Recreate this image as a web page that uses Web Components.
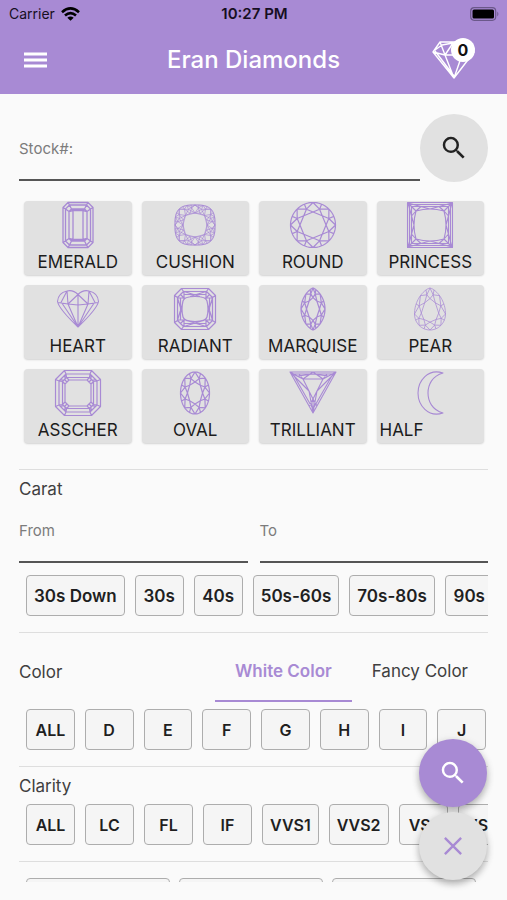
<!DOCTYPE html>
<html lang="en">
<head>
<meta charset="utf-8">
<meta name="viewport" content="width=device-width, initial-scale=1">
<title>Eran Diamonds</title>
<style>
  html, body { margin: 0; height: 100%; }
  body { font-family: Inter, Roboto, "Liberation Sans", sans-serif; color: #404040; background: #fafafa;
    --accent: #a88ad4; --tile: #e1e1e1; --line: #dedede; }
</style>
</head>
<body>
<diamond-app></diamond-app>
<script>
const define = (name, html, setup) => {
  const template = document.createElement('template');
  template.innerHTML = html;
  customElements.define(name, class extends HTMLElement {
    connectedCallback() {
      if (this.shadowRoot) return;
      this.attachShadow({ mode: 'open' }).append(template.content.cloneNode(true));
      if (setup) setup(this, this.shadowRoot);
    }
  });
};

/* ---- Diamond outlines, all on a 48 x 48 canvas ---- */
const C = 24;
const fmt = p => p.map(v => v.toFixed(2)).join(' ');
const poly = pts => 'M' + pts.map(fmt).join('L') + 'Z';
const seg = (a, b) => 'M' + fmt(a) + 'L' + fmt(b);
const lerp = (c, p, k) => [c[0] + (p[0] - c[0]) * k, c[1] + (p[1] - c[1]) * k];

function brilliant(outline, { n = 8, table = 0.55, mid = 0.77, centre = [C, C] } = {}) {
  const rim = t => outline(t * 2 * Math.PI / n - Math.PI / 2);
  let d = poly(Array.from({ length: 96 }, (_, i) => rim(i * n / 96)));
  const inner = i => lerp(centre, rim(i), table);
  const m = i => lerp(centre, rim(i + 0.5), mid);
  d += poly(Array.from({ length: n }, (_, i) => inner(i)));
  for (let i = 0; i < n; i++) {
    d += seg(inner(i), m(i)) + seg(inner(i + 1), m(i)) + seg(m(i), rim(i)) + seg(m(i), rim(i + 1)) + seg(m(i), rim(i + 0.5));
  }
  return d;
}
const ellipse = (rx, ry) => a => [C + rx * Math.cos(a), C + ry * Math.sin(a)];
const cushion = a => {
  const c = Math.cos(a), s = Math.sin(a), k = Math.pow(Math.pow(Math.abs(c), 3) + Math.pow(Math.abs(s), 3), -1 / 3);
  return [C + 20 * c * k, C + 20 * s * k];
};
const marquise = a => {
  const s = Math.sin(a), c = Math.cos(a);
  return [C + Math.sign(c) * 12 * Math.pow(Math.abs(c), 1.5), C + 21 * s];
};
const pear = a => {
  const s = Math.sin(a), c = Math.cos(a);
  return s > 0 ? [C + 15.5 * c, 29 + 16 * s] : [C + Math.sign(c) * 15.5 * Math.pow(Math.abs(c), 1.4), 29 + 26 * s];
};
const octagon = (w, h, c) => [[-w + c, -h], [w - c, -h], [w, -h + c], [w, h - c], [w - c, h], [-w + c, h], [-w, h - c], [-w, -h + c]].map(([x, y]) => [C + x, C + y]);
function steps(rings) {
  const all = rings.map(r => octagon(...r));
  return all.map(poly).join('') + all.slice(1).map((r, k) => r.map((p, i) => seg(all[k][i], p)).join('')).join('');
}
/* Calls fn for each quarter turn and joins the results. */
const quarters = fn => [0, 1, 2, 3].map(q => {
  const rot = ([x, y]) => { for (let i = 0; i < q; i++) [x, y] = [-y, x]; return [C + x, C + y]; };
  return fn(rot);
}).join('');

const SHAPES = {
  emerald: [steps([[15, 22.5, 5], [12.5, 20, 4], [9, 16, 2.5], [5, 14.5, 0]]), 1.3],
  cushion: [brilliant(cushion, { table: 0.6, mid: 0.8 }) + brilliant(cushion, { n: 16, table: 0.6, mid: 0.86 }), 0.7],
  round: [brilliant(ellipse(22.5, 22.5), { table: 0.58, mid: 0.76 }), 1.2],
  princess: [steps([[22.5, 22.5, 0], [18.5, 18.5, 0]]) + quarters(r =>
    `M${fmt(r([-14, -14]))}Q${fmt(r([0, -18]))} ${fmt(r([14, -14]))}` +
    seg(r([-18.5, -18.5]), r([-14, -14])) + seg(r([-22, -22]), r([0, -16])) + seg(r([22, -22]), r([0, -16])) +
    seg(r([-14, -14]), r([-9, -18.5])) + seg(r([14, -14]), r([9, -18.5])) +
    seg(r([-20.5, -20.5]), r([20.5, -20.5]))), 1.1],
  heart: ['M24 9.5Q29 4.5 35 6Q44 8 44.5 16.5Q43 24 24 42Q5 24 3.5 16.5Q4 8 13 6Q19 4.5 24 9.5Z' +
    'M4 17.5L14 19L24 20L34 19L44 17.5M24 9.5V42M14 19L24 42M34 19L24 42M8 18.3L24 42M40 18.3L24 42' +
    'M24 9.5L14 19L13 6L7 17.5M24 9.5L34 19L35 6L41 17.5', 1.1],
  radiant: [steps([[20.5, 20.5, 7], [17.5, 17.5, 6]]) + 'M24 11.5Q35 11.5 36 16Q38 24 36 32Q35 36.5 24 36.5Q13 36.5 12 32Q10 24 12 16Q13 11.5 24 11.5Z' + quarters(r =>
    seg(r([-11, -17.5]), r([5, -12.5])) + seg(r([11, -17.5]), r([-5, -12.5])) + seg(r([-11, -17.5]), r([-11, -9])) +
    seg(r([11, -17.5]), r([11, -9])) + seg(r([-15, -15]), r([-10, -10])) + seg(r([-11, -14.5]), r([11, -14.5]))), 1.2],
  marquise: [brilliant(marquise, { table: 0.54, mid: 0.78 }), 1.2],
  pear: [brilliant(pear, { table: 0.56, mid: 0.78, centre: [C, 27] }), 0.75],
  asscher: [steps([[22.5, 22.5, 9], [19, 19, 7], [15.5, 15.5, 4], [13, 13, 4]]) + quarters(r =>
    seg(r([-18, -13]), r([-13, -13])) + seg(r([-13, -18]), r([-13, -13])) + seg(r([-13, -13]), r([-11, -11]))), 1.2],
  oval: [brilliant(ellipse(14.5, 21), { table: 0.52, mid: 0.74 }), 1.2],
  trilliant: ['M1 3H47L24 44ZM4 5H44L24 40ZM14 10H34L24 30ZM1 3L14 10L24 3L34 10L47 3M14 10L4 5M24 44L20 22L1 3M24 44L28 22L47 3M24 44V30M14 10L10 5M34 10L38 5M9 7L24 5L39 7M20 37L24 30L28 37', 1.1],
  half: ['M37 4C22-1 12 12 12 24S22 49 37 44C26 41 22 32 22 24S26 7 37 4Z', 1.1],
};

define('shape-card', `
<style>
  :host { display: block; min-width: 0; }
  button { width: 100%; height: 74px; padding: 0 3px; border: 0; border-radius: 4px; background: var(--tile);
    box-shadow: 0 1px 2px rgba(0,0,0,.16); font: 400 17px/20px Inter, sans-serif; color: #1c1c1c;
    display: flex; flex-direction: column; align-items: center; gap: 3px; overflow: hidden; }
  svg { width: 48px; height: 48px; flex: none; fill: none; stroke: var(--accent); stroke-linejoin: round; }
  span { white-space: nowrap; }
  :host([start]) span { align-self: flex-start; }
</style>
<button type="button"><svg viewBox="0 0 48 48" aria-hidden="true"><path/></svg><span><slot></slot></span></button>`,
(el, root) => {
  const [d, width] = SHAPES[el.getAttribute('shape')];
  const path = root.querySelector('path');
  path.setAttribute('d', d);
  path.setAttribute('stroke-width', width);
});

define('status-bar', `
<style>
  :host { display: grid; grid-template-columns: 1fr auto 1fr; align-items: center; height: 27px; padding: 0 7px 0 9px;
    background: var(--accent); color: #170f22; font-size: 14px; line-height: 20px; }
  .left { display: flex; align-items: center; gap: 6px; }
  b { font-size: 15px; font-weight: 600; }
  .battery { justify-self: end; }
</style>
<span class="left">Carrier
  <svg width="19" height="14" viewBox="0 0 19 14" fill="none" stroke="#000" stroke-width="2.6"><path d="M1 5.2Q9.5-2.4 18 5.2M4 8.5Q9.5 3.6 15 8.5"/><path d="M9.5 13.8L6.3 10.8Q9.5 8 12.7 10.8Z" fill="#000" stroke="none"/></svg>
</span>
<b>10:27 PM</b>
<svg class="battery" width="30" height="14" viewBox="0 0 30 14"><rect x=".7" y=".7" width="25" height="12.6" rx="3.5" fill="none" stroke="#6b588a" stroke-width="1.2"/><rect x="2.5" y="2.5" width="21.5" height="9" rx="1.5"/><path d="M27.3 4.5Q29.500 7 27.3 9.5Z" fill="#6b588a"/></svg>`);

define('app-header', `
<style>
  :host { display: grid; grid-template-columns: 1fr auto 1fr; align-items: center; height: 67px; padding: 0 18px 2px;
    box-sizing: border-box; background: var(--accent); color: #fff; }
  h1 { margin: 0; font-size: 24px; font-weight: 500; line-height: 32px; }
  button { border: 0; background: none; padding: 0; color: inherit; display: block; }
  .menu { width: 34px; height: 34px; }
  .cart { position: relative; justify-self: end; width: 43px; height: 44px; margin-right: 14px; }
  .badge { position: absolute; top: 0; right: 0; width: 24px; height: 24px; border-radius: 50%; background: #fff; color: #111;
    font: 700 16px/24px Inter, sans-serif; text-align: center; }
</style>
<button class="menu" type="button" aria-label="Menu"><svg width="34" height="34" viewBox="0 0 34 34" fill="#fff"><path d="M6 9.5h23v3H6zM6 15.5h23v3H6zM6 21.5h23v3H6z"/></svg></button>
<h1><slot></slot></h1>
<button class="cart" type="button" aria-label="Basket">
  <svg width="43" height="44" viewBox="0 0 43 44" fill="none" stroke="#fff" stroke-width="1.4" stroke-linejoin="round"><path d="M8 4H34L42 14L22 40L1 14ZM3 13L22 38M1 14L13 17H30L42 14M8 4L13 17L21 5L30 17L34 4M3 12L10 7L21 5M13 17L22 40L30 17"/></svg>
  <span class="badge">0</span>
</button>`);

define('text-field', `
<style>
  :host { display: block; flex: 1; min-width: 0; }
  div { display: flex; flex-direction: column; border-bottom: 2px solid #555; }
  label { font-size: 15px; line-height: 20px; color: #7c7c7c; }
  input { width: 100%; box-sizing: border-box; height: 20px; padding: 0; border: 0; outline: 0; background: none; font: 16px/20px Inter, sans-serif; color: #222; }
</style>
<div><label for="field"><slot></slot></label><input id="field" type="text"></div>`);

const ICONS = {
  search: '<path fill="currentColor" d="M15.5 14h-.79l-.28-.27A6.471 6.471 0 0 0 16 9.5 6.5 6.5 0 1 0 9.5 16c1.61 0 3.09-.59 4.23-1.57l.27.28v.79l5 4.99L20.49 19l-4.99-5zm-6 0C7.01 14 5 11.99 5 9.5S7.01 5 9.5 5 14 7.01 14 9.5 11.99 14 9.5 14z"/>',
  close: '<path d="M5.5 5.5L18.5 18.5M18.5 5.5L5.5 18.5" fill="none" stroke="currentColor" stroke-width="1.9"/>',
};
define('round-button', `
<style>
  :host { display: block; flex: none; color: #222; }
  :host([tone=accent]) { color: #fff; }
  :host([icon=close]) { color: var(--accent); }
  button { width: 68px; height: 68px; padding: 0; border: 0; border-radius: 50%; background: var(--tile); color: inherit;
    display: grid; place-items: center; }
  :host([tone=accent]) button { background: var(--accent); }
  :host([raised]) button { box-shadow: 0 4px 7px rgba(0,0,0,.26), 0 1px 10px rgba(0,0,0,.08); }
  svg { width: 30px; height: 30px; }
</style>
<button type="button"><svg viewBox="0 0 24 24" aria-hidden="true"></svg></button>`,
(el, root) => {
  root.querySelector('svg').innerHTML = ICONS[el.getAttribute('icon')];
  root.querySelector('button').setAttribute('aria-label', el.getAttribute('icon'));
});

define('option-chip', `
<style>
  :host { display: block; flex: none; min-width: 49px; font-size: 16px; }
  button { width: 100%; height: 41px; padding: 0 7px; border: 1px solid #adadad; border-radius: 4px; background: #f5f5f5;
    font: inherit; font-weight: 600; line-height: 20px; color: #1f1f1f; white-space: nowrap; }
</style>
<button type="button"><slot></slot></button>`);

define('chip-row', `
<style>
  :host { display: flex; gap: 10px; padding: 0 2px 0 7px; overflow-x: auto; scrollbar-width: none; }
  :host([fill]) ::slotted(option-chip) { flex: 1; min-width: 0; }
  :host([large]) ::slotted(option-chip) { font-size: 17px; }
  :host([wide]) { gap: 9px; }
  :host([wide]) ::slotted(option-chip) { width: 144px; }
</style>
<slot></slot>`);

define('filter-section', `
<style>
  :host { display: block; border-top: 1px solid var(--line); padding-bottom: 16px; }
  header { display: flex; align-items: center; justify-content: space-between; line-height: 24px; padding-top: 7px; }
  h2 { margin: 0; font-size: 17px; font-weight: 400; }
  :host([tabbed]) header { padding: 8px 0 7px; }
  :host([bare]) header { padding-top: 16px; }
</style>
<header><h2><slot name="title"></slot></h2><slot name="tabs"></slot></header>
<slot></slot>`);

define('tab-pair', `
<style>
  :host { display: flex; }
  button { height: 61px; padding: 0 20px; border: 0; border-bottom: 2px solid transparent; background: none;
    font: 400 17px/24px Inter, sans-serif; color: #404040; white-space: nowrap; }
  button[aria-selected=true] { color: var(--accent); border-color: var(--accent); font-weight: 600; }
</style>
<button type="button" role="tab" aria-selected="true">White Color</button>
<button type="button" role="tab" aria-selected="false">Fancy Color</button>`,
el => el.setAttribute('role', 'tablist'));

define('diamond-app', `
<style>
  :host { display: flex; flex-direction: column; height: 100vh; box-sizing: border-box; padding-bottom: 18px; position: relative; }
  status-bar, app-header { flex: none; }
  main { flex: 1; min-height: 0; overflow-y: auto; scrollbar-width: none; padding: 20px 19px 0; }
  .stock { display: flex; align-items: flex-start; }
  .stock text-field { padding-top: 25px; }
  .shapes { display: grid; grid-template-columns: repeat(4, 1fr); gap: 10px; padding: 0 4px 0 5px; margin: 19px 0 26px; }
  .range { display: flex; gap: 12px; padding: 20px 0 12px; }
  .clarity { display: block; padding-top: 6px; }
  .actions { position: absolute; right: 20px; bottom: 20px; display: flex; flex-direction: column; gap: 5px; }
</style>
<status-bar></status-bar>
<app-header>Eran Diamonds</app-header>
<main>
  <div class="stock"><text-field>Stock#:</text-field><round-button icon="search"></round-button></div>
  <div class="shapes">
    <shape-card shape="emerald">EMERALD</shape-card><shape-card shape="cushion">CUSHION</shape-card>
    <shape-card shape="round">ROUND</shape-card><shape-card shape="princess">PRINCESS</shape-card>
    <shape-card shape="heart">HEART</shape-card><shape-card shape="radiant">RADIANT</shape-card>
    <shape-card shape="marquise">MARQUISE</shape-card><shape-card shape="pear">PEAR</shape-card>
    <shape-card shape="asscher">ASSCHER</shape-card><shape-card shape="oval">OVAL</shape-card>
    <shape-card shape="trilliant">TRILLIANT</shape-card><shape-card shape="half" start>HALF</shape-card>
  </div>
  <filter-section>
    <span slot="title">Carat</span>
    <div class="range"><text-field>From</text-field><text-field>To</text-field></div>
    <chip-row large><option-chip>30s Down</option-chip><option-chip>30s</option-chip><option-chip>40s</option-chip><option-chip>50s-60s</option-chip><option-chip>70s-80s</option-chip><option-chip>90s</option-chip></chip-row>
  </filter-section>
  <filter-section tabbed>
    <span slot="title">Color</span><tab-pair slot="tabs"></tab-pair>
    <chip-row fill><option-chip>ALL</option-chip><option-chip>D</option-chip><option-chip>E</option-chip><option-chip>F</option-chip><option-chip>G</option-chip><option-chip>H</option-chip><option-chip>I</option-chip><option-chip>J</option-chip></chip-row>
  </filter-section>
  <filter-section>
    <span slot="title">Clarity</span>
    <div class="clarity"><chip-row><option-chip>ALL</option-chip><option-chip>LC</option-chip><option-chip>FL</option-chip><option-chip>IF</option-chip><option-chip>VVS1</option-chip><option-chip>VVS2</option-chip><option-chip>VS1</option-chip><option-chip>VS2</option-chip></chip-row></div>
  </filter-section>
  <filter-section bare>
    <chip-row wide><option-chip></option-chip><option-chip></option-chip><option-chip></option-chip></chip-row>
  </filter-section>
</main>
<div class="actions"><round-button icon="search" tone="accent" raised></round-button><round-button icon="close" raised></round-button></div>`);
</script>
</body>
</html>
